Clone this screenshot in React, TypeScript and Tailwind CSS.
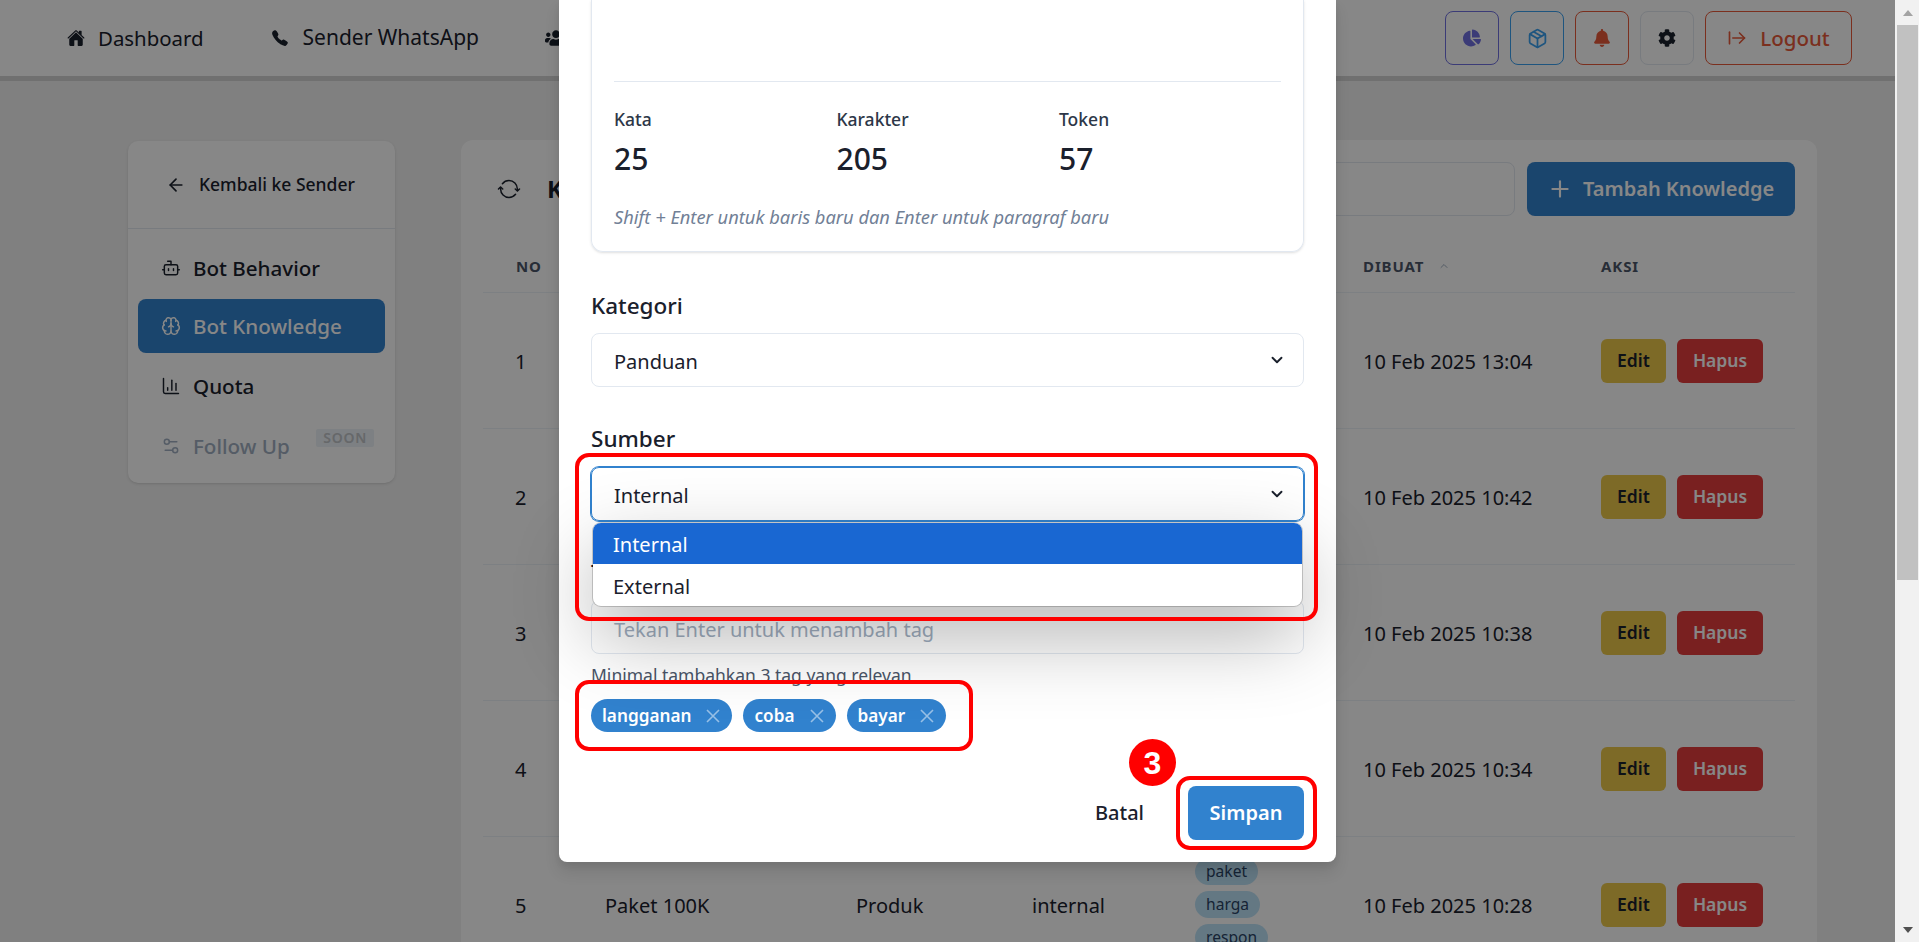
import { ArrowLeft, ArrowRightFromLine, Bot, Brain, ChartColumn, ChevronDown, ChevronUp, Package, Plus, Settings2 } from "lucide-react";
import { FaBell, FaChartPie, FaCog, FaUsers } from "react-icons/fa";
import { IoCall, IoHome, IoSync } from "react-icons/io5";

const rows = [
  { no: 1, date: "10 Feb 2025 13:04" },
  { no: 2, date: "10 Feb 2025 10:42" },
  { no: 3, date: "10 Feb 2025 10:38" },
  { no: 4, date: "10 Feb 2025 10:34" },
  { no: 5, date: "10 Feb 2025 10:28", title: "Paket 100K", category: "Produk", source: "internal", tags: ["paket", "harga", "respon"] },
];

const gridCols = "grid grid-cols-[90px_251px_176px_163px_168px_238px_1fr]";

function Navbar() {
  return (
    <nav className="h-[76px] shrink-0 bg-white flex items-center justify-between pl-[67px] pr-[43px] shadow-[0_5px_0_rgba(0,0,0,0.12)] relative">
      <div className="flex items-center text-[#1a202c]">
        <div className="flex items-center gap-[13px] text-[20.4px]">
          <IoHome className="w-[18px] h-[18px]" />
          <span>Dashboard</span>
        </div>
        <div className="flex items-center gap-[14px] ml-[67px] text-[21px]">
          <IoCall className="w-[18px] h-[18px]" />
          <span>Sender WhatsApp</span>
        </div>
        <FaUsers className="w-[22px] h-[18px] ml-[66px]" />
      </div>
      <div className="flex items-center gap-[11px]">
        <button className="w-[54px] h-[54px] rounded-[8px] border border-[#7070e0] text-[#7070e0] flex items-center justify-center">
          <FaChartPie className="w-[18px] h-[18px]" />
        </button>
        <button className="w-[54px] h-[54px] rounded-[8px] border border-[#3aa0f0] text-[#3aa0f0] flex items-center justify-center">
          <Package className="w-[21px] h-[21px]" strokeWidth={2} />
        </button>
        <button className="w-[54px] h-[54px] rounded-[8px] border border-[#e85a3a] text-[#e85a3a] flex items-center justify-center">
          <FaBell className="w-[18px] h-[18px]" />
        </button>
        <button className="w-[54px] h-[54px] rounded-[8px] border border-[#e2e8f0] text-[#1a202c] flex items-center justify-center">
          <FaCog className="w-[18px] h-[18px]" />
        </button>
        <button className="w-[147px] h-[54px] rounded-[8px] border border-[#e85a3a] text-[#e85a3a] text-[20.5px] font-medium flex items-center justify-center gap-[13px]">
          <ArrowRightFromLine className="w-[20px] h-[20px]" />
          <span>Logout</span>
        </button>
      </div>
    </nav>
  );
}

function Sidebar() {
  return (
    <aside className="w-[267px] h-[342px] mt-px shrink-0 bg-white rounded-[10px] shadow-sm">
      <div className="h-[88px] border-b border-[#e2e8f0] flex items-center pl-[38px] gap-[13px] text-[17.5px] font-medium text-[#1a202c]">
        <ArrowLeft className="w-[20px] h-[20px]" />
        <span>Kembali ke Sender</span>
      </div>
      <div className="px-[10px] pt-[12px] flex flex-col text-[20.6px] font-medium text-[#1a202c]">
        <div className="h-[54px] flex items-center pl-[23px] gap-[12px]">
          <Bot className="w-[20px] h-[20px]" strokeWidth={1.75} />
          <span>Bot Behavior</span>
        </div>
        <div className="h-[54px] mt-[4px] rounded-[8px] bg-[#3182ce] text-white flex items-center pl-[23px] gap-[12px]">
          <Brain className="w-[20px] h-[20px]" strokeWidth={1.75} />
          <span>Bot Knowledge</span>
        </div>
        <div className="h-[54px] mt-[6px] flex items-center pl-[23px] gap-[12px]">
          <ChartColumn className="w-[20px] h-[20px]" strokeWidth={1.75} />
          <span>Quota</span>
        </div>
        <div className="h-[54px] mt-[6px] flex items-center pl-[23px] gap-[12px] text-[#a0aec0] relative">
          <Settings2 className="w-[20px] h-[20px]" strokeWidth={1.75} />
          <span>Follow Up</span>
          <span className="absolute right-[11px] top-[10px] h-[18px] px-[7px] rounded-[2px] bg-[#edf2f7] text-[#c0c4c8] text-[14px] font-semibold tracking-[0.05em] leading-[18px]">SOON</span>
        </div>
      </div>
    </aside>
  );
}

function KnowledgeTable() {
  return (
    <main className="flex-1 h-[900px] ml-[66px] bg-white rounded-t-[12px] px-[22px] pt-[22px]">
      <div className="h-[54px] flex items-center">
        <IoSync className="w-[24px] h-[24px] ml-[14px] text-[#1a202c]" />
        <h2 className="ml-[26px] text-[24px] font-bold text-[#1a202c]">Knowledge</h2>
        <div className="ml-auto w-[300px] h-[54px] rounded-[8px] border border-[#e2e8f0]" />
        <button className="ml-[12px] w-[268px] h-[54px] rounded-[8px] bg-[#3182ce] text-white text-[20px] font-semibold flex items-center pl-[20px] gap-[10px]">
          <Plus className="w-[26px] h-[26px]" strokeWidth={2} />
          <span>Tambah Knowledge</span>
        </button>
      </div>
      <div className={`${gridCols} h-[77px] items-center pt-[24px] border-b border-[#edf2f7] text-[15px] font-bold tracking-[0.06em] text-[#4a5568]`}>
        <div className="pl-[33px]">NO</div>
        <div />
        <div />
        <div />
        <div />
        <div className="pl-[32px] flex items-center gap-[14px]">
          DIBUAT
          <ChevronUp className="w-[12px] h-[12px] text-[#a0aec0]" />
        </div>
        <div className="pl-[32px]">AKSI</div>
      </div>
      {rows.map((row) => (
        <div key={row.no} className={`${gridCols} h-[136px] items-center border-b border-[#edf2f7] text-[20px] text-[#1a202c]`}>
          <div className="pl-[32px] pt-[2px]">{row.no}</div>
          <div className="pl-[32px] pt-[2px]">{row.title}</div>
          <div className="pl-[32px] pt-[2px]">{row.category}</div>
          <div className="pl-[32px] pt-[2px]">{row.source}</div>
          <div className="pl-[32px] flex flex-col items-start gap-[6px]">
            {row.tags?.map((tag) => (
              <span key={tag} className="h-[27px] px-[11px] rounded-full bg-[#bee3f8] text-[#2a4365] text-[15.6px] leading-[26px]">{tag}</span>
            ))}
          </div>
          <div className="pl-[32px] pt-[2px]">{row.date}</div>
          <div className="pl-[32px] flex gap-[11px]">
            <button className="w-[65px] h-[44px] rounded-[6px] bg-[#ecc94b] text-[#1a202c] text-[17.5px] font-semibold">Edit</button>
            <button className="w-[86px] h-[44px] rounded-[6px] bg-[#e53e3e] text-white text-[17.5px] font-semibold">Hapus</button>
          </div>
        </div>
      ))}
    </main>
  );
}

function Stat({ label, value }: { label: string; value: string }) {
  return (
    <div>
      <div className="text-[17.5px] leading-[24px] font-medium text-[#2d3748]">{label}</div>
      <div className="mt-[8px] text-[30px] leading-[40px] font-medium text-[#1a202c]">{value}</div>
    </div>
  );
}

function SelectBox({ value, focused }: { value: string; focused?: boolean }) {
  return (
    <div className={`h-[54px] rounded-[8px] border flex items-center justify-between pl-[22px] pr-[17px] text-[20px] text-[#1a202c] ${focused ? "border-[#3182ce] shadow-[0_0_0_1px_#3182ce]" : "border-[#e2e8f0]"}`}>
      <span className="pt-[3px]">{value}</span>
      <ChevronDown className="w-[18px] h-[18px]" strokeWidth={2.5} />
    </div>
  );
}

function TagPill({ label }: { label: string }) {
  return (
    <span className="h-[33px] rounded-full bg-[#3182ce] text-white text-[17.2px] font-semibold flex items-center pl-[11px] pr-[12px] gap-[15px]">
      {label}
      <svg viewBox="0 0 14 14" className="w-[14px] h-[14px] opacity-50" fill="none" stroke="currentColor" strokeWidth="1.6">
        <path d="M1 1L13 13M13 1L1 13" />
      </svg>
    </span>
  );
}

function Modal() {
  return (
    <div className="relative w-[777px] h-[862px] bg-white rounded-b-[8px] px-[32px] shadow-[0_10px_15px_rgba(0,0,0,0.1),0_4px_6px_rgba(0,0,0,0.05)]">
      <div className="h-[252px] border-x border-b border-[#e2e8f0] rounded-b-[12px] px-[22px] shadow-sm">
        <div className="h-[82px] border-b border-[#e2e8f0]" />
        <div className="grid grid-cols-[222.5px_222.5px_1fr] pt-[25px]">
          <Stat label="Kata" value="25" />
          <Stat label="Karakter" value="205" />
          <Stat label="Token" value="57" />
        </div>
        <p className="mt-[26px] text-[18.3px] leading-[24px] italic text-[#718096]">Shift + Enter untuk baris baru dan Enter untuk paragraf baru</p>
      </div>

      <label className="block mt-[39px] mb-[12px] text-[22.5px] leading-[30px] font-medium text-[#1a202c]">Kategori</label>
      <SelectBox value="Panduan" />

      <label className="block mt-[37px] mb-[13px] text-[22.5px] leading-[30px] font-medium text-[#1a202c]">Sumber</label>
      <div className="relative">
        <SelectBox value="Internal" focused />
        <div className="absolute left-[2px] right-[2px] top-[56px] h-[83px] z-10 bg-white rounded-[8px] overflow-hidden text-[20px] shadow-[0_0_0_1px_rgba(0,0,0,0.18),0_30px_80px_rgba(0,0,0,0.3)]">
          <div className="h-[41px] pt-[2px] bg-[#1967d2] text-white flex items-center pl-[20px]">Internal</div>
          <div className="h-[42px] pt-[3px] text-[#1a202c] flex items-center pl-[20px]">External</div>
        </div>
      </div>

      <label className="block mt-[37px] mb-[12px] text-[22.5px] leading-[30px] font-medium text-[#1a202c]">Tag</label>
      <div className="h-[54px] rounded-[8px] border border-[#e2e8f0] flex items-center pl-[22px] pt-[6px] text-[20px] text-[#a0aec0]">Tekan Enter untuk menambah tag</div>
      <p className="mt-[10px] text-[17.5px] leading-[22px] text-[#4a5568]">Minimal tambahkan 3 tag yang relevan</p>
      <div className="mt-[13px] flex gap-[11px]">
        {["langganan", "coba", "bayar"].map((tag) => (
          <TagPill key={tag} label={tag} />
        ))}
      </div>
      <div className="mt-[54px] flex justify-end items-center gap-[44px]">
        <span className="text-[20px] font-medium text-[#1a202c]">Batal</span>
        <button className="w-[116px] h-[54px] rounded-[8px] bg-[#3182ce] text-white text-[20px] font-semibold">Simpan</button>
      </div>

      {/* annotations drawn on top of the screenshot */}
      <div className="absolute left-[16px] top-[453px] w-[743px] h-[168px] z-20 rounded-[14px] border-[4px] border-[#ff0000]" />
      <div className="absolute left-[16px] top-[680px] w-[398px] h-[71px] z-20 rounded-[14px] border-[4px] border-[#ff0000]" />
      <div className="absolute left-[617px] top-[776px] w-[141px] h-[74px] z-20 rounded-[14px] border-[4px] border-[#ff0000]" />
      <div className="absolute left-[570px] top-[739px] w-[47px] h-[47px] z-20 rounded-full bg-[#ff0000] text-white text-[32px] font-bold font-['Liberation_Sans',sans-serif] flex items-center justify-center">3</div>
    </div>
  );
}

function Scrollbar() {
  return (
    <div className="w-[24px] shrink-0 bg-[#f1f1f1] flex flex-col items-start">
      <div className="h-[25px] w-full flex items-center justify-center pl-[2px]">
        <div className="w-0 h-0 border-x-[5.5px] border-x-transparent border-b-[6px] border-b-[#a3a3a3]" />
      </div>
      <div className="ml-[2px] w-[21px] h-[555px] bg-[#c1c1c1]" />
      <div className="mt-auto h-[25px] w-full flex items-center justify-center pl-[2px]">
        <div className="w-0 h-0 border-x-[5.5px] border-x-transparent border-t-[6px] border-t-[#505050]" />
      </div>
    </div>
  );
}

export default function App() {
  return (
    <div className="h-screen flex overflow-hidden font-['Noto_Sans',sans-serif]">
      <div className="relative flex-1 min-w-0 h-full overflow-hidden bg-[#f1f1f1] flex flex-col">
        <Navbar />
        <div className="flex pl-[128px] pr-[78px] pt-[64px]">
          <Sidebar />
          <KnowledgeTable />
        </div>
        <div className="absolute inset-0 bg-black/[0.47] flex justify-center">
          <Modal />
        </div>
      </div>
      <Scrollbar />
    </div>
  );
}
